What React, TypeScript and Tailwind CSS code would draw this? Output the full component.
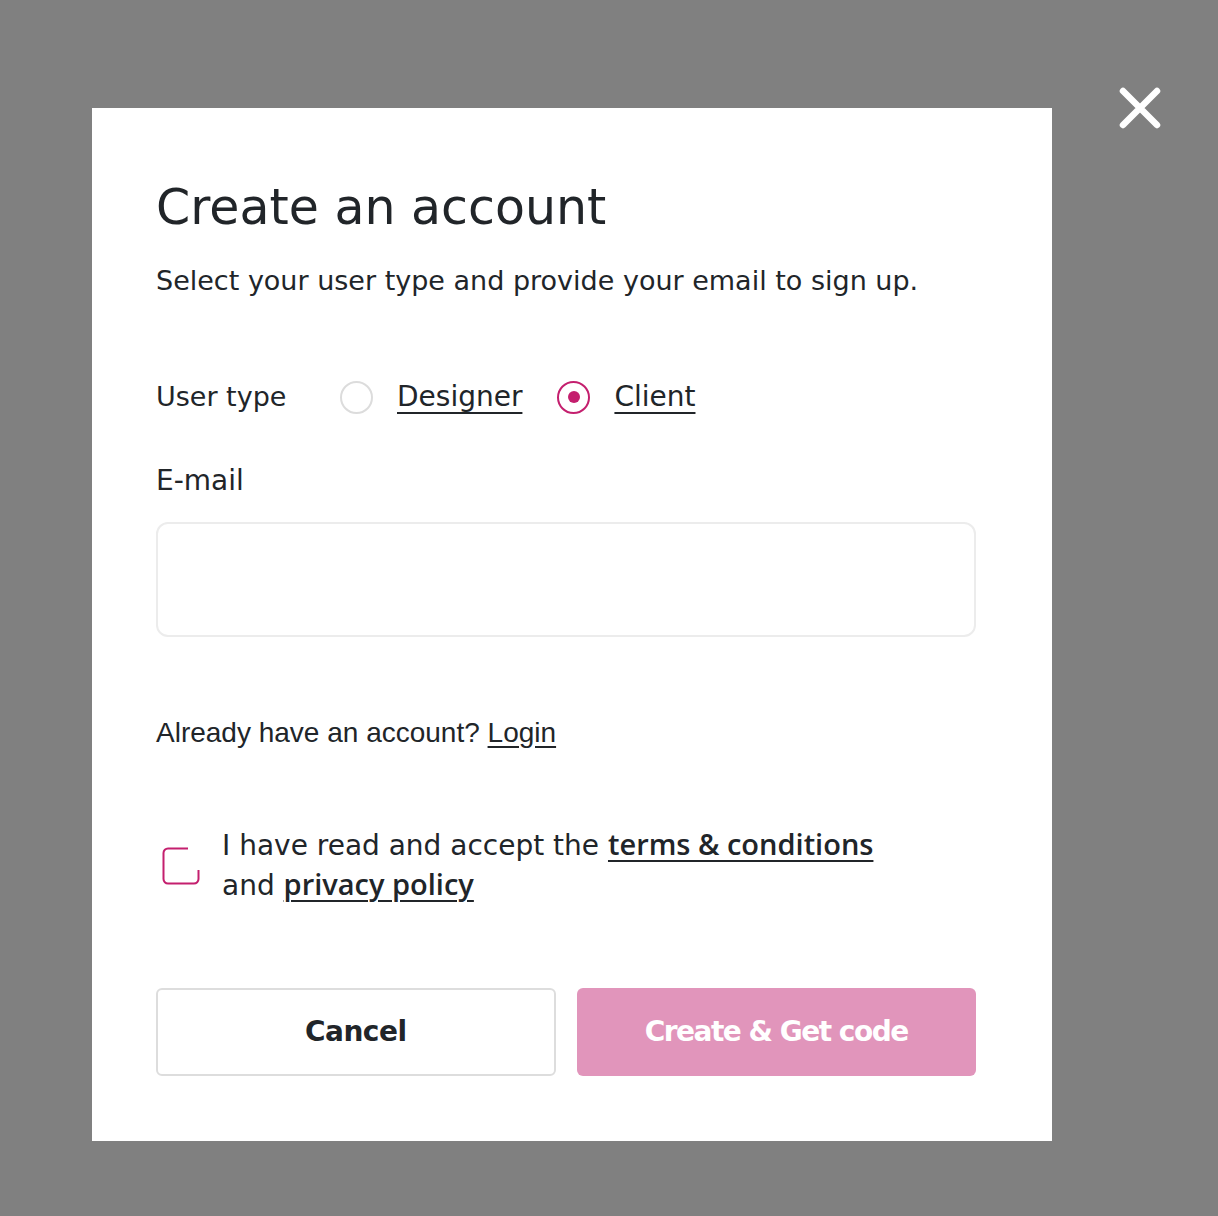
import { useState } from "react";

const poppins = { fontFamily: '"DejaVu Sans", "Open Sans", sans-serif' };
const semi = { fontFamily: '"Open Sans", "DejaVu Sans", sans-serif' };

const Radio = ({ label, checked, onClick }: { label: string; checked: boolean; onClick: () => void }) => (
  <button type="button" onClick={onClick} className="flex items-center gap-[24px]">
    <span
      className={`flex h-[33px] w-[33px] items-center justify-center rounded-full border-2 ${
        checked ? "border-[#c41f6e]" : "border-[#dcdcdc]"
      }`}
    >
      {checked && <span className="h-[12px] w-[12px] rounded-full bg-[#c41f6e]" />}
    </span>
    <span className="text-[28px] leading-[40px] text-[#212529] underline underline-offset-[6px] decoration-[2px]">
      {label}
    </span>
  </button>
);

const App = () => {
  const [type, setType] = useState<"designer" | "client">("client");

  return (
    <div className="relative min-h-[1216px] w-full bg-[#808080] pl-[92px] pt-[108px]" style={poppins}>
      {/* close */}
      <button type="button" className="absolute left-[1118px] top-[86px] h-[44px] w-[44px]">
        <svg viewBox="0 0 44 44" className="h-full w-full">
          <path d="M5 5 L39 39 M39 5 L5 39" stroke="#fff" strokeWidth="6.5" strokeLinecap="round" />
        </svg>
      </button>

      <div className="w-[960px] bg-white pl-[64px] pr-[76px] pt-[71px] pb-[65px] text-[#212529]">
        <h1 className="text-[49px] leading-[58px] font-normal">Create an account</h1>
        <p className="mt-[26px] text-[27px] leading-[36px]">
          Select your user type and provide your email to sign up.
        </p>

        <div className="mt-[78px] flex h-[40px] items-center">
          <span className="text-[27px] leading-[40px] w-[184px]">User type</span>
          <div className="flex items-center gap-[35px]">
            <Radio label="Designer" checked={type === "designer"} onClick={() => setType("designer")} />
            <Radio label="Client" checked={type === "client"} onClick={() => setType("client")} />
          </div>
        </div>

        <label className="mt-[46px] block text-[28px] leading-[36px]">E-mail</label>
        <input
          type="email"
          className="mt-[23px] block h-[115px] w-full rounded-[12px] border-2 border-[#ececec] px-6 text-[26px] outline-none"
        />

        <p
          className="mt-[78px] text-[28px] leading-[36px] text-[#212529]"
          style={{ fontFamily: '"Liberation Sans", Arial, sans-serif' }}
        >
          Already have an account? <a className="underline underline-offset-[4px]">Login</a>
        </p>

        <div className="mt-[75px] flex items-center">
          <span className="ml-[6px] mr-[22px] h-[38px] w-[38px] shrink-0">
            <svg viewBox="0 0 38 38" className="h-full w-full">
              <path
                d="M26 1.5 H6 A4.5 4.5 0 0 0 1.5 6 V32 A4.5 4.5 0 0 0 6 36.5 H32 A4.5 4.5 0 0 0 36.5 32 V23"
                fill="none"
                stroke="#c41f6e"
                strokeWidth="2"
              />
            </svg>
          </span>
          <p className="text-[28px] leading-[40px]">
            I have read and accept the{" "}
            <a
              className="text-[29px] leading-[0] font-semibold underline underline-offset-[5px] decoration-[2px]"
              style={semi}
            >
              terms &amp; conditions
            </a>
            <br />
            and{" "}
            <a
              className="text-[29px] leading-[0] font-semibold underline underline-offset-[5px] decoration-[2px]"
              style={semi}
            >
              privacy policy
            </a>
          </p>
        </div>

        <div className="mt-[82px] grid grid-cols-2 gap-[21px]">
          <button
            type="button"
            className="h-[88px] rounded-[6px] border-2 border-[#dddddd] bg-white text-[28px] font-semibold tracking-[-0.5px] text-[#212529]"
          >
            Cancel
          </button>
          <button
            type="button"
            className="h-[88px] rounded-[6px] bg-[#e195bb] text-[28px] font-semibold tracking-[-1.5px] text-white"
          >
            Create &amp; Get code
          </button>
        </div>
      </div>
    </div>
  );
};

export default App;
